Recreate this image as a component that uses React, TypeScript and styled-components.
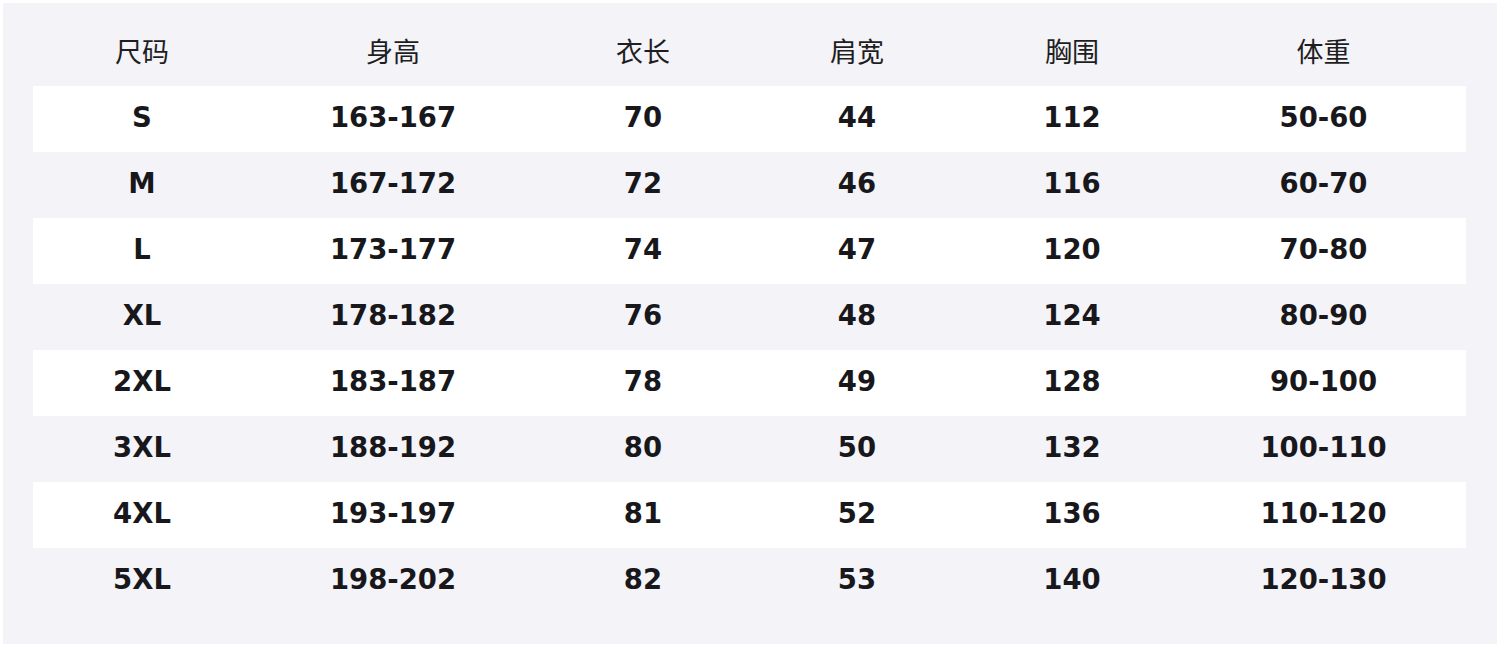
import React from "react";
import styled, { createGlobalStyle } from "styled-components";

const GlobalStyle = createGlobalStyle`
  html, body {
    margin: 0;
    padding: 0;
    background: #ffffff;
  }
  body {
    font-family: "DejaVu Sans", "Noto Sans CJK SC", sans-serif;
  }
`;

const Panel = styled.div`
  margin: 3px 3px 0 3px;
  width: 1494px;
  height: 641px;
  box-sizing: border-box;
  padding: 17px 31px 30px 30px;
  background: #f3f3f8;
`;

const Row = styled.div<{ $white?: boolean }>`
  display: grid;
  grid-template-columns: 218px 284px 216px 212px 218px 285px;
  height: 66px;
  align-items: center;
  background: ${(p) => (p.$white ? "#ffffff" : "transparent")};
`;

const HeadCell = styled.div`
  text-align: center;
  padding-bottom: 6px;
  font-family: "Noto Sans CJK SC", "DejaVu Sans", sans-serif;
  font-size: 27px;
  color: #1e1e22;
`;

const Cell = styled.div`
  text-align: center;
  padding-bottom: 4px;
  font-family: "DejaVu Sans", "Noto Sans CJK SC", sans-serif;
  font-weight: bold;
  font-size: 27.5px;
  color: #18181c;
`;

const headers = ["尺码", "身高", "衣长", "肩宽", "胸围", "体重"];

const rows = [
  ["S", "163-167", "70", "44", "112", "50-60"],
  ["M", "167-172", "72", "46", "116", "60-70"],
  ["L", "173-177", "74", "47", "120", "70-80"],
  ["XL", "178-182", "76", "48", "124", "80-90"],
  ["2XL", "183-187", "78", "49", "128", "90-100"],
  ["3XL", "188-192", "80", "50", "132", "100-110"],
  ["4XL", "193-197", "81", "52", "136", "110-120"],
  ["5XL", "198-202", "82", "53", "140", "120-130"],
];

const App: React.FC = () => {
  return (
    <>
      <GlobalStyle />
      <Panel>
        <Row>
          {headers.map((h) => (
            <HeadCell key={h}>{h}</HeadCell>
          ))}
        </Row>
        {rows.map((r, i) => (
          <Row key={r[0]} $white={i % 2 === 0}>
            {r.map((v, j) => (
              <Cell key={j}>{v}</Cell>
            ))}
          </Row>
        ))}
      </Panel>
    </>
  );
};

export default App;
